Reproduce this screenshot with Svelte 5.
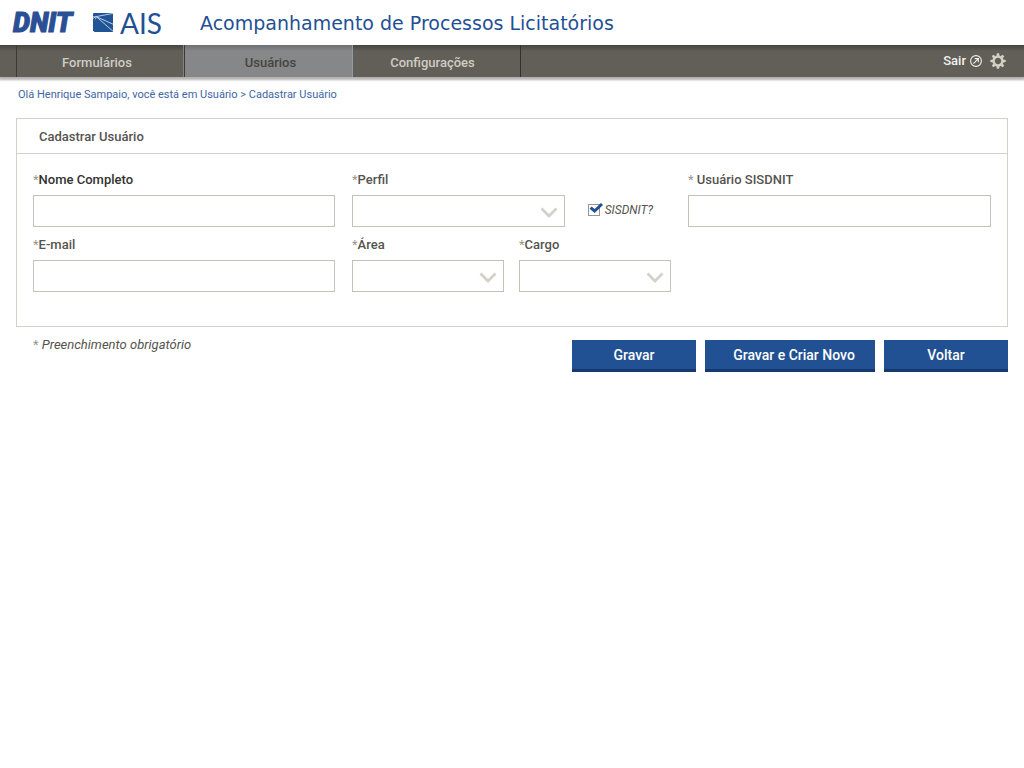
<script>
  const tabs = ['Formulários', 'Usuários', 'Configurações'];
  let active = $state('Usuários');
  let nome = $state('');
  let email = $state('');
  let usuario = $state('');
  let sisdnit = $state(true);
</script>

{#snippet combo(id, text)}
  <div class="field">
    <label for={id}><span class="star">*</span>{text}</label>
    <div class="combo">
      <select {id}><option value=""></option></select>
      <svg class="chevron" viewBox="0 0 18 12" aria-hidden="true">
        <path d="M1.5 1.5 L9 9 L16.5 1.5" fill="none" stroke="#d3d2c8" stroke-width="2.8" />
      </svg>
    </div>
  </div>
{/snippet}

<header>
  <div class="dnit">DNIT</div>
  <div class="ais">
    <svg viewBox="0 0 20 19" width="20" height="19" aria-hidden="true">
      <path d="M0.8 0H20V19H1.5L0 17.5V0.8Z" fill="#1f5597" />
      <path d="M0 5.4 L3.2 3.6 L20 0.4 M3.2 3.6 L20 11.2 M3.2 3.6 L20 18.2" fill="none" stroke="#c9d8ea" stroke-width="0.9" />
      <path d="M0 3.6 H3.4 L2.4 6.4" fill="none" stroke="#c9d8ea" stroke-width="0.7" />
    </svg>
    <span>AIS</span>
  </div>
  <h1>Acompanhamento de Processos Licitatórios</h1>
</header>

<nav>
  <div class="tabs">
    {#each tabs as tab}
      <button class="tab" class:active={active === tab} onclick={() => (active = tab)}>{tab}</button>
    {/each}
  </div>
  <div class="tools">
    <a href="#sair">
      Sair
      <svg viewBox="0 0 12 12" width="12" height="12" aria-hidden="true">
        <circle cx="6" cy="6" r="5.4" fill="none" stroke="#f1f1ef" stroke-width="1.1" />
        <path d="M3.4 8.6 L8.2 3.8 M4.8 3.6 H8.4 V7.2" fill="none" stroke="#f1f1ef" stroke-width="1.1" />
      </svg>
    </a>
    <button class="gear" aria-label="Configurações">
      <svg viewBox="-8 -8 16 16" width="16" height="16" aria-hidden="true">
        <circle r="4.4" fill="none" stroke="#d3d0c5" stroke-width="2.4" />
        {#each [0, 45, 90, 135, 180, 225, 270, 315] as angle}
          <path d="M-1.6 -5 L-1.1 -7.7 H1.1 L1.6 -5Z" fill="#d3d0c5" transform="rotate({angle})" />
        {/each}
      </svg>
    </button>
  </div>
</nav>

<main>
  <p class="crumbs">Olá Henrique Sampaio, você está em Usuário &gt; Cadastrar Usuário</p>

  <form onsubmit={(e) => e.preventDefault()}>
    <section class="panel">
      <h2>Cadastrar Usuário</h2>
      <div class="grid">
        <div class="field">
          <label class="dark" for="nome"><span class="star">*</span>Nome Completo</label>
          <input id="nome" type="text" bind:value={nome} />
        </div>
        <div class="profile">
          {@render combo('perfil', 'Perfil')}
          <label class="check">
            <span class="box">
              <input type="checkbox" bind:checked={sisdnit} />
              {#if sisdnit}
                <svg viewBox="0 0 15 13" width="15" height="13" aria-hidden="true">
                  <path d="M1.6 5.6 L5.6 9 L13 2" fill="none" stroke="#1f5094" stroke-width="3" />
                </svg>
              {/if}
            </span>
            <em>SISDNIT?</em>
          </label>
        </div>
        <div class="field">
          <label for="usuario"><span class="star">*</span> Usuário SISDNIT</label>
          <input id="usuario" type="text" bind:value={usuario} />
        </div>
        <div class="field">
          <label for="email"><span class="star">*</span>E-mail</label>
          <input id="email" type="text" bind:value={email} />
        </div>
        <div class="pair">
          {@render combo('area', 'Área')}
          {@render combo('cargo', 'Cargo')}
        </div>
      </div>
    </section>

    <div class="footer">
      <p class="note"><span class="star">*</span> Preenchimento obrigatório</p>
      <div class="actions">
        <button class="action">Gravar</button>
        <button class="action wide">Gravar e Criar Novo</button>
        <button class="action" type="button">Voltar</button>
      </div>
    </div>
  </form>
</main>

<style>
  :global(body) {
    margin: 0;
    background: #fff;
    font-family: Roboto, 'Liberation Sans', sans-serif;
    color: #55534e;
  }
  h1, h2, p { margin: 0; }
  button, input, select {
    box-sizing: border-box;
    margin: 0;
    font-family: inherit;
  }
  button { cursor: pointer; }
  svg { display: block; }

  header {
    display: flex;
    align-items: center;
    box-sizing: border-box;
    height: 45px;
    padding: 2px 13px 0;
    color: #1f5094;
  }
  .dnit {
    width: 80px;
    font-size: 27px;
    line-height: 43px;
    font-weight: 900;
    font-style: italic;
    color: #2a4f94;
    -webkit-text-stroke: 1px #2a4f94;
  }
  .ais {
    display: flex;
    align-items: center;
    gap: 7px;
    width: 107px;
    font-family: Lato, sans-serif;
    font-size: 28px;
    line-height: 43px;
    font-weight: 400;
  }
  .ais svg { margin-bottom: 2px; }
  h1 {
    font-family: 'DejaVu Sans', sans-serif;
    font-size: 19px;
    line-height: 43px;
    font-weight: 400;
    white-space: nowrap;
  }

  nav {
    display: flex;
    justify-content: space-between;
    height: 32px;
    padding: 0 18px 0 16px;
    background: linear-gradient(#474440, #625f59 6px);
    box-shadow: 0 2px 2px 1px #b4b3b1;
    clip-path: inset(0 0 -6px 0);
  }
  .tabs { display: flex; }
  .tab {
    width: 168px;
    padding: 2px 6px 0 0;
    border: 0;
    border-left: 1px solid #3c3a36;
    border-right: 1px solid #85837e;
    background: none;
    color: #cfccc4;
    font-size: 13px;
    font-weight: 500;
  }
  .tab:last-child {
    padding: 2px 8px 0 0;
    border-left: 0;
    border-right-color: #33312e;
  }
  .tab.active {
    width: 169px;
    padding: 2px 0 0 4px;
    background: linear-gradient(#6e6f70, #868789 6px);
    border-left-color: #3c3a36;
    border-right-color: #939aa2;
    color: #45443f;
  }
  .tools {
    display: flex;
    align-items: center;
    gap: 8px;
  }
  .tools a {
    display: flex;
    align-items: center;
    gap: 4px;
    color: #f1f1ef;
    font-size: 13px;
    line-height: 32px;
    font-weight: 500;
    text-decoration: none;
  }
  .gear {
    padding: 0;
    border: 0;
    background: none;
  }

  main { padding: 9px 16px; }
  .crumbs {
    padding: 0 2px;
    margin-bottom: 14px;
    font-size: 11px;
    line-height: 18px;
    color: #3d66a3;
  }
  .panel { border: 1px solid #d3d2c8; }
  h2 {
    padding: 2px 22px 0;
    border-bottom: 1px solid #d3d2c8;
    font-size: 13px;
    line-height: 32px;
    font-weight: 500;
  }
  .grid {
    display: grid;
    grid-template-columns: 302fr 319fr 303fr;
    gap: 9px 17px;
    padding: 17px 16px 34px;
  }
  .field {
    display: flex;
    flex-direction: column;
    gap: 6px;
    min-width: 0;
  }
  .field label {
    font-size: 13px;
    line-height: 18px;
    font-weight: 500;
  }
  .combo { position: relative; }
  .field label.dark { color: #33322f; }
  .star {
    font-weight: 400;
    font-style: normal;
    color: #99968e;
  }
  input[type='text'], select {
    width: 100%;
    height: 32px;
    padding: 0 8px;
    border: 1px solid #c5c1b7;
    border-radius: 0;
    background: #fff;
    font-size: 13px;
    appearance: none;
  }
  .chevron {
    position: absolute;
    right: 7px;
    top: 12px;
    width: 18px;
    height: 12px;
    pointer-events: none;
  }
  .profile {
    display: grid;
    grid-template-columns: 2fr 1fr;
    align-items: end;
  }
  .pair {
    display: grid;
    grid-template-columns: 1fr 1fr;
    gap: 15px;
  }
  .check {
    display: flex;
    align-items: center;
    gap: 5px;
    height: 30px;
    padding: 0 0 2px 23px;
    font-size: 12px;
  }
  .box {
    position: relative;
    width: 12px;
    height: 12px;
  }
  .box input {
    display: block;
    width: 12px;
    height: 12px;
    border: 1px solid #99968e;
    appearance: none;
  }
  .box svg {
    position: absolute;
    left: 1px;
    top: -2px;
    pointer-events: none;
  }

  .footer {
    display: flex;
    justify-content: space-between;
    padding-top: 13px;
  }
  .note {
    padding-left: 17px;
    font-size: 13px;
    line-height: 10px;
    font-style: italic;
  }
  .actions {
    display: flex;
    gap: 9px;
  }
  .action {
    min-width: 124px;
    height: 32px;
    padding: 0 16px;
    border: 0;
    border-bottom: 3px solid #163a70;
    background: #215192;
    color: #fff;
    font-size: 14px;
    font-weight: 500;
  }
  .action.wide {
    min-width: 170px;
    padding: 0 16px 0 24px;
  }
</style>
